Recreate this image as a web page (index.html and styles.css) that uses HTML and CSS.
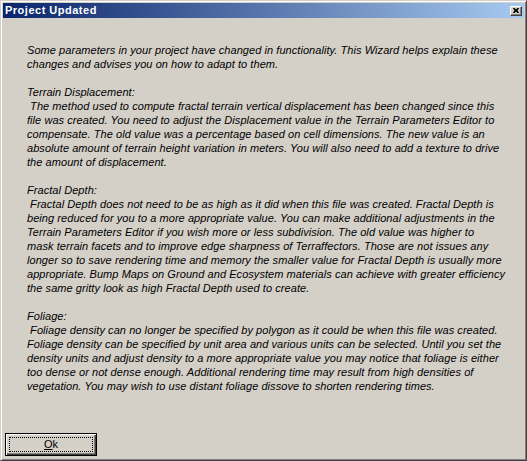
FILE: index.html
```html
<!DOCTYPE html>
<html>
<head>
<meta charset="utf-8">
<title>Project Updated</title>
<link rel="stylesheet" href="styles.css">
</head>
<body>
<div class="window">
  <div class="titlebar">
    <span class="title">Project Updated</span>
    <button class="close" aria-label="Close">
      <svg width="8" height="7" viewBox="0 0 8 7"><path d="M0 0h2l2 2 2-2h2v1L6 3.5 8 6v1H6L4 5 2 7H0V6l2-2.5L0 1z" fill="#000"/></svg>
    </button>
  </div>
  <div class="content">
    <div class="message">
      <p>Some parameters in your project have changed in functionality. This Wizard helps explain these<br>changes and advises you on how to adapt to them.</p>
      <p>Terrain Displacement:<br>&nbsp;The method used to compute fractal terrain vertical displacement has been changed since this<br>file was created. You need to adjust the Displacement value in the Terrain Parameters Editor to<br>compensate. The old value was a percentage based on cell dimensions. The new value is an<br>absolute amount of terrain height variation in meters. You will also need to add a texture to drive<br>the amount of displacement.</p>
      <p>Fractal Depth:<br>&nbsp;Fractal Depth does not need to be as high as it did when this file was created. Fractal Depth is<br>being reduced for you to a more appropriate value. You can make additional adjustments in the<br>Terrain Parameters Editor if you wish more or less subdivision. The old value was higher to<br>mask terrain facets and to improve edge sharpness of Terraffectors. Those are not issues any<br>longer so to save rendering time and memory the smaller value for Fractal Depth is usually more<br>appropriate. Bump Maps on Ground and Ecosystem materials can achieve with greater efficiency<br>the same gritty look as high Fractal Depth used to create.</p>
      <p>Foliage:<br>&nbsp;Foliage density can no longer be specified by polygon as it could be when this file was created.<br>Foliage density can be specified by unit area and various units can be selected. Until you set the<br>density units and adjust density to a more appropriate value you may notice that foliage is either<br>too dense or not dense enough. Additional rendering time may result from high densities of<br>vegetation. You may wish to use distant foliage dissove to shorten rendering times.</p>
    </div>
    <button class="ok"><span class="focus"><u>O</u>k</span></button>
  </div>
</div>
</body>
</html>
```
FILE: styles.css
```css
html, body {
  margin: 0;
  padding: 0;
  background: #d4d0c8;
}

.window {
  width: 527px;
  height: 461px;
  box-sizing: border-box;
  background: #d4d0c8;
  border: 1px solid;
  border-color: #d4d0c8 #404040 #404040 #d4d0c8;
  box-shadow: inset 1px 1px 0 #ffffff, inset -1px -1px 0 #808080;
  padding: 2px;
  display: flex;
  flex-direction: column;
}

.titlebar {
  height: 15px;
  flex: none;
  background: linear-gradient(to right, #0a246a, #a6caf0);
  display: flex;
  align-items: center;
  justify-content: space-between;
  padding: 0 2px 0 2px;
}

.title {
  color: #ffffff;
  font-family: "Liberation Sans", Arial, sans-serif;
  font-weight: bold;
  font-size: 11px;
  letter-spacing: 0.5px;
  line-height: 15px;
}

.close {
  width: 12px;
  height: 10px;
  padding: 0;
  margin: 0;
  box-sizing: border-box;
  background: #d4d0c8;
  border: 1px solid;
  border-color: #ffffff #404040 #404040 #ffffff;
  box-shadow: inset -1px -1px 0 #808080;
  display: flex;
  align-items: center;
  justify-content: center;
}

.close svg {
  display: block;
  width: 6px;
  height: 5px;
}

.content {
  flex: 1;
  display: flex;
  flex-direction: column;
  justify-content: space-between;
  align-items: flex-start;
  padding: 25px 0 2px 2px;
}

.message {
  padding-left: 22px;
  font-family: "Liberation Sans", Arial, sans-serif;
  font-style: italic;
  font-size: 11px;
  letter-spacing: 0.06px;
  line-height: 14px;
  color: #000000;
  white-space: nowrap;
}

.message p {
  margin: 0 0 14px 0;
}

.ok {
  width: 92px;
  height: 23px;
  box-sizing: border-box;
  padding: 0;
  margin: 0;
  background: #d4d0c8;
  border: 1px solid #000000;
  box-shadow: inset 1px 1px 0 #ffffff, inset -1px -1px 0 #404040, inset -2px -2px 0 #808080;
  font-family: "Liberation Sans", Arial, sans-serif;
  font-size: 11px;
  color: #000000;
  display: flex;
  align-items: stretch;
  justify-content: stretch;
}

.focus {
  flex: 1;
  margin: 3px;
  border: 1px dotted #000000;
  display: flex;
  align-items: center;
  justify-content: center;
  line-height: 13px;
}
```
